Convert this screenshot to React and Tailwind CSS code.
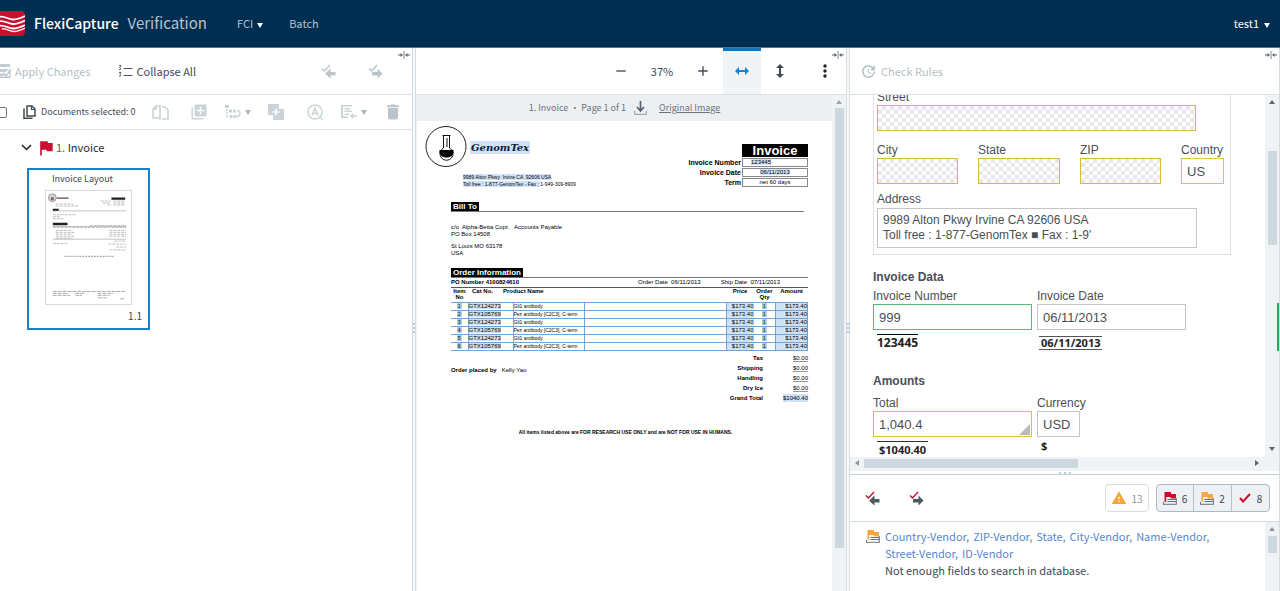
import React from "react";
import { MdAdd, MdDelete, MdFlag, MdLibraryAdd, MdMoreVert, MdRemove, MdUpdate, MdWarning } from "react-icons/md";

const orderLines = [
  { no: 1, cat: "GTX124273", name: "Gli1 antibody" },
  { no: 2, cat: "GTX105769", name: "Pez antibody [C2C3], C-term" },
  { no: 3, cat: "GTX124273", name: "Gli1 antibody" },
  { no: 4, cat: "GTX105769", name: "Pez antibody [C2C3], C-term" },
  { no: 5, cat: "GTX124273", name: "Gli1 antibody" },
  { no: 6, cat: "GTX105769", name: "Pez antibody [C2C3], C-term" },
];

const totals = [
  ["Tax", "$0.00"],
  ["Shipping", "$0.00"],
  ["Handling", "$0.00"],
  ["Dry Ice", "$0.00"],
];

const ruleFields = [
  "Country-Vendor,",
  "ZIP-Vendor,",
  "State,",
  "City-Vendor,",
  "Name-Vendor,",
  "Street-Vendor,",
  "ID-Vendor",
];

/* ---------- icons ---------- */

const Logo = () => (
  <svg viewBox="2 0 25 25" className="h-[25px] w-[25px] shrink-0">
    <rect width="27" height="25" rx="4" fill="#c8102e" />
    <g fill="none" stroke="#fff" strokeWidth="1.8">
      <path d="M0 6c6-2 10 2.500 15 2.500S23 7 27 5" />
      <path d="M0 10.500c6-2 10 2.500 15 2.500s8-1.500 12-3.500" />
      <path d="M0 15c6-2 10 2.500 15 2.500s8-1.500 12-3.500" />
      <path d="M4 18c5-1 7 2.500 12 2.500 4 0 7-1.500 11-3.500" strokeWidth="1.300" />
    </g>
  </svg>
);

const Caret = ({ className = "" }) => (
  <svg viewBox="0 0 6 5" className={`h-[5px] w-1.5 shrink-0 ${className}`}>
    <path d="M0 0h6L3 5z" fill="currentColor" />
  </svg>
);

const CollapseIcon = () => (
  <svg viewBox="0 0 12 8" className="h-2 w-3">
    <path d="M6 0v8" stroke="#7b858d" strokeWidth="1" />
    <path d="M0 4h4M8 4h4" stroke="#5b656e" strokeWidth="1" />
    <path d="M2.500 2L5 4 2.500 6zM9.500 2L7 4l2.500 2z" fill="#5b656e" />
  </svg>
);

const ApplyIcon = () => (
  <svg viewBox="0 0 12 14" className="h-3.5 w-3">
    <path d="M0 0h10v3H0zM0 5h9l-3 3H0zM0 9.500h3l2 2.500H0z" fill="#c3cdd3" />
    <path d="M3.500 9l3 3L10 6v7.300H0" fill="none" stroke="#b4bfc6" strokeWidth="1.200" />
  </svg>
);

const TreeIcon = () => (
  <svg viewBox="0 0 14 12" className="h-3 w-3.5" fill="none" stroke="#4d5760">
    <path d="M4.500 3.500h9M4.500 10.500h9" strokeWidth="1.200" />
    <path d="M0 .5h2L.8 2.500 2 4 0 5M0 7.500h2L.8 9.500 2 10.500 0 11.500" strokeWidth=".9" />
  </svg>
);

const CheckArrow = ({ flip, check, arrow }) => (
  <svg viewBox="0 0 15 15" className="h-[15px] w-[15px]">
    <path d="M1 4.500l2.500 2.500L9 1" fill="none" stroke={check} strokeWidth="1.400" />
    {flip ? (
      <path d="M9.500 4.500L14.500 9.500l-5 5v-3H4V8h5.500z" fill={arrow} />
    ) : (
      <path d="M9.500 4.500V8H14.500v3.500H9.500v3L4 9.700z" fill={arrow} />
    )}
  </svg>
);

const PagesIcon = () => (
  <svg viewBox="0 0 13 14" className="h-3.5 w-[13px]" fill="none" stroke="#3f4a52" strokeWidth="1.500">
    <path d="M4 1h5l3 3v7H4z" />
    <path d="M8.500 1v3.500H12" strokeWidth="1.200" />
    <path d="M1 3.500v9.700h8.500" />
  </svg>
);

const SplitPagesIcon = () => (
  <svg viewBox="0 0 17 17" className="h-[17px] w-[17px]" fill="none" stroke="#cad3d8" strokeWidth="1.600">
    <path d="M8 2H4L1 5v9h7zM8 2v14M10 3h3l3 3v9h-6M4 2v3H1" />
  </svg>
);

const SortIcon = () => (
  <svg viewBox="0 0 16 14" className="h-3.5 w-4">
    <path d="M0 0h4v3H0zM1 4h1.500v2H1zM1 7h1.500v2H1zM1 10.500h2V12H1zM4 4.500h3v3H4zM8 4.500h2.500v3H8zM4.500 10h3v3h-3zM8.500 10h3v3h-3z" fill="#cad3d8" />
    <path d="M12 5.500c4 0 4 6 0 6" fill="none" stroke="#cad3d8" strokeWidth="1.400" />
  </svg>
);

const MergeIcon = () => (
  <svg viewBox="0 0 16 16" className="h-4 w-4">
    <path d="M0 0h11v5h5v11H5v-5H0z" fill="#cad3d8" />
    <path d="M8 4.500v7M4.500 8h7" stroke="#fff" strokeWidth="1.600" />
  </svg>
);

const RecognizeIcon = () => (
  <svg viewBox="0 0 17 17" className="h-[17px] w-[17px]" fill="none" stroke="#cad3d8" strokeWidth="1.500">
    <circle cx="8" cy="8" r="7" />
    <path d="M5 11.500L8 4l3 7.500M6 9.500h4M12.500 13l3.500 3" />
  </svg>
);

const ListArrowIcon = () => (
  <svg viewBox="0 0 16 14" className="h-3.5 w-4">
    <path d="M0 0h11v1.500H2v10h5V13H0zM3.500 3H9v1.500H3.500zM3.500 5.500H11V7H3.500zM3.500 8.500H8V10H3.500zM12 8v2.200h4v1.500h-4V14L9 11z" fill="#cad3d8" />
  </svg>
);

const FlagDocIcon = ({ color }) => (
  <svg viewBox="0 0 14 13" className="h-[13px] w-3.5 shrink-0">
    <path d="M4.500 7.500h9M4.500 9.500h9M0 12.300h13.500M.5 10v2.500M13.300 6v6.500" stroke="#6a747c" strokeWidth="1" fill="none" />
    <path d="M1.500 0H8v2h5v4.500H7.500v-1.500H3.200V10H1.500z" fill={color} />
  </svg>
);

const Flask = () => (
  <svg viewBox="0 0 42 42" className="h-[42px] w-[42px]">
    <circle cx="21" cy="20.500" r="20" fill="#fff" stroke="#222" strokeWidth="1" />
    <path d="M18.500 10v12a6.500 6.500 0 1 0 6 0V10" fill="#fff" stroke="#111" strokeWidth="1" />
    <path d="M14.500 24h14c2 10-16 10-14 0z" fill="#000" />
    <path d="M17.500 9.500h8M22 12v9" stroke="#111" strokeWidth="1" />
  </svg>
);

/* miniature of the scanned page */
const PageThumb = () => (
  <svg viewBox="0 0 87 115" className="h-[115px] w-[87px] border border-[#d5dadd] bg-white">
    <circle cx="6.500" cy="6.500" r="4" fill="#c5dcd5" stroke="#888" strokeWidth=".8" />
    <circle cx="6.500" cy="7.500" r="1.800" fill="#c05060" />
    <path d="M11 7h12" stroke="#666" strokeWidth="1.500" />
    <path d="M67 7.500h14M7 19h6M7 33.500h15" stroke="#222" strokeWidth="2.500" />
    <g stroke="#bbb" strokeWidth="1" strokeDasharray="3 1">
      <path d="M10 13h18M10 15h23M56 10h10M58 12h8M63 14h4M69 10h12M69 12h12M69 14h12M7 24h24M7 26h8M7 28h11M45 35h37M7 53.500h15" />
      <path d="M7 37h75M10 40h17M10 42h20M10 44h17M10 46h20M10 48h17M65 40h17M65 42h17M65 44h17M65 46h17M70 51h12M64 54h18M72 57h10M65 60h17" />
    </g>
    <path d="M7 20h75M7 36h75M7 49h75" stroke="#999" strokeWidth=".6" />
    <path d="M19 66.500h50" stroke="#aaa" strokeWidth="1.300" strokeDasharray="2 1" />
    <g stroke="#aaa" strokeWidth="1" strokeDasharray="4 1">
      <path d="M7 102.500h75M7 104.500h16M7 106.500h18M30 104.500h9M30 106.500h7M53 104.500h16M53 106.500h12M53 109h10M76 110h5" />
    </g>
  </svg>
);

/* ---------- shared bits ---------- */

const Splitter = () => (
  <div className="flex flex-col items-center justify-center gap-0.5 border-x border-[#d3dce2] bg-[#f7f9fa] pt-4">
    <i className="size-0.5 bg-[#c0ccd3]" />
    <i className="size-0.5 bg-[#c0ccd3]" />
    <i className="size-0.5 bg-[#c0ccd3]" />
  </div>
);

const Field = ({ id, label, value, className, tone = "border-[#c4c7ca]", empty }) => (
  <div className={`flex flex-col ${className}`}>
    <label htmlFor={id} className="text-xs leading-4 whitespace-nowrap">{label}</label>
    <input
      id={id}
      defaultValue={value}
      className={`h-[26px] w-full border px-[5px] text-[13px] ${tone} ${
        empty ? "bg-[repeating-conic-gradient(#e8e8e8_0_25%,#fff_0_50%)] bg-[length:8px_8px]" : "bg-white"
      }`}
    />
  </div>
);

const Header = () => (
  <header className="flex h-12 shrink-0 items-center border-b border-[#5c7288] bg-[#002e50] pr-2.5 text-[11px] text-[#b6c4d0]">
    <Logo />
    <h1 className="ml-[9px] flex items-baseline gap-[9px]">
      <span className="text-sm font-medium text-white">FlexiCapture</span>
      <span className="text-[15px]">Verification</span>
    </h1>
    <nav className="ml-[30px] flex gap-[26px]">
      <button className="flex items-center gap-1">
        FCI <Caret className="mt-1 text-white" />
      </button>
      <a href="#batch">Batch</a>
    </nav>
    <button className="ml-auto flex items-center gap-[5px] text-white">
      test1 <Caret className="mt-1" />
    </button>
  </header>
);

const DocumentsPanel = () => (
  <section className="flex min-w-0 flex-col">
    <div className="relative flex h-[47px] shrink-0 items-center border-b border-[#d9e1e6] text-[11px]">
      <button className="flex items-center gap-[3px] text-[#b4bfc6]">
        <ApplyIcon /> Apply Changes
      </button>
      <button className="ml-7 flex items-center gap-1 text-[#414b54]">
        <TreeIcon /> Collapse All
      </button>
      <div className="mr-[29px] ml-auto flex gap-8">
        <button aria-label="Previous error"><CheckArrow check="#b9c4cb" arrow="#b9c4cb" /></button>
        <button aria-label="Next error"><CheckArrow flip check="#b9c4cb" arrow="#b9c4cb" /></button>
      </div>
      <button aria-label="Collapse panel" className="absolute top-[3px] right-0.5"><CollapseIcon /></button>
    </div>

    <div className="flex h-[35px] shrink-0 items-center border-b border-[#d9e1e6]">
      <input
        type="checkbox"
        aria-label="Select all documents"
        className="-ml-1 size-[11px] shrink-0 appearance-none rounded-[2px] border border-[#6d757c] bg-white"
      />
      <div className="ml-4 flex w-[118px] items-center gap-[5px] text-[9px] whitespace-nowrap text-[#414b54]">
        <PagesIcon /> Documents selected: 0
      </div>
      <div className="grid flex-1 grid-cols-7 items-center justify-items-center">
        <button aria-label="Split document"><SplitPagesIcon /></button>
        <button aria-label="Add page"><MdLibraryAdd className="size-[18px] text-[#cad3d8]" /></button>
        <button aria-label="Document type" className="flex items-center gap-1 text-[#cad3d8]"><SortIcon /><Caret className="text-[#a9b5bd]" /></button>
        <button aria-label="Merge"><MergeIcon /></button>
        <button aria-label="Recognize"><RecognizeIcon /></button>
        <button aria-label="Move to" className="flex items-center gap-1"><ListArrowIcon /><Caret className="text-[#a9b5bd]" /></button>
        <button aria-label="Delete"><MdDelete className="size-5 text-[#b9c4cb]" /></button>
      </div>
    </div>

    <div className="flex h-[35px] items-center pl-[21px] text-[11px] text-[#222a30]">
      <button aria-label="Toggle document" className="mr-2">
        <svg viewBox="0 0 11 7" className="h-[7px] w-[11px]">
          <path d="M1 1l4.500 4.500L10 1" fill="none" stroke="#222" strokeWidth="1.500" />
        </svg>
      </button>
      <MdFlag className="-ml-1 size-5 text-[#c8102e]" />
      <span><span className="text-[#5b656e]">1.</span> Invoice</span>
    </div>

    <button className="mt-[3px] ml-[27px] flex h-[162px] w-[123px] flex-col items-center border-2 border-[#1b80c4] bg-white text-[#414b54]">
      <span className="mb-0.5 pr-3 text-[9px] leading-[18px]">Invoice Layout</span>
      <PageThumb />
      <span className="mt-0.5 mr-1.5 self-end text-[10px] leading-[18px]">1.1</span>
    </button>
  </section>
);

const hl = "bg-[#cfe2f8]";

const InvoicePage = () => (
  <article className="min-w-0 flex-1 bg-white pt-[5px] pr-6 pl-2 font-['Liberation_Sans',sans-serif] text-[6px] leading-[7px] text-black">
    <div className="flex">
      <Flask />
      <div className="ml-[3px] flex flex-col items-start pt-[15px]">
        <h2 className={`px-px font-['DejaVu_Serif',serif] text-[10px] leading-[13px] font-bold text-[#0b1c38] italic ${hl}`}>GenomTex</h2>
        <p className="mt-5 -ml-[7px] text-[5px] whitespace-pre">
          <span className={hl}>9989 Alton Pkwy  Irvine CA  92606 USA</span>
          <br />
          <span className={hl}>Toll free : 1-877-GenomTex - Fax : </span>1-949-309-8909
        </p>
      </div>
      <table className="mt-[17px] ml-auto h-[42px] border-separate border-spacing-y-px text-right text-[7px] leading-[7px]">
        <tbody>
          <tr>
            <td />
            <th className="w-[66px] bg-black text-center text-[13px] leading-[13px] font-bold text-white">Invoice</th>
          </tr>
          <tr>
            <th className="pr-px">Invoice Number</th>
            <td className="border border-[#888] pl-2 text-left text-[6px]"><span className={hl}>123445</span></td>
          </tr>
          <tr>
            <th className="pr-px">Invoice Date</th>
            <td className="border border-[#888] text-center text-[6px]"><span className={hl}>06/11/2013</span></td>
          </tr>
          <tr>
            <th className="pr-px">Term</th>
            <td className="border border-[#888] text-center text-[6px]">net 60 days</td>
          </tr>
        </tbody>
      </table>
    </div>

    <div className="ml-[26px]">
      <h3 className="mt-3.5 mr-1 flex border-b border-[#777] text-[8px] leading-[9px] font-bold">
        <span className="bg-black px-0.5 text-white">Bill To</span>
      </h3>
      <p className="mt-3 whitespace-pre">c/o  Alpha-Betta Copr,   Accounts Payable</p>
      <p>PO Box 14508</p>
      <p className="mt-[5px]">St Louis MO  63178</p>
      <p>USA</p>

      <h3 className="mt-[11px] flex border-b border-[#777] text-[8px] leading-[9px] font-bold">
        <span className="bg-black px-0.5 text-white">Order Information</span>
      </h3>
      <div className="flex leading-[9px] whitespace-pre">
        <b className="flex-1">PO Number 4100824610</b>
        <span className="mr-5">Order Date  06/11/2013</span>
        <span className="mr-7">Ship Date  07/11/2013</span>
      </div>

      <table className="w-full table-fixed border-collapse border-y border-[#555]">
        <colgroup>
          <col className="w-[17px]" />
          <col className="w-[45px]" />
          <col className="w-[71px]" />
          <col />
          <col className="w-[27px]" />
          <col className="w-[22px]" />
          <col className="w-[32px]" />
        </colgroup>
        <thead>
          <tr className="h-[15px] text-center align-top text-[6px] leading-[6px]">
            <th>Item<br />No</th>
            <th className="pl-1 text-left">Cat No.</th>
            <th className="text-left whitespace-nowrap" colSpan={2}><span className="-ml-2.5">Product Name</span></th>
            <th>Price</th>
            <th>Order<br />Qty</th>
            <th>Amount</th>
          </tr>
        </thead>
        <tbody className="text-[5px] leading-[7px] whitespace-nowrap">
          {orderLines.map((line) => (
            <tr key={line.no} className="h-2 border-y border-[#6aa7dd]">
              <td className="text-center"><span className="bg-[#a9cdf0] px-px">{line.no}</span></td>
              <td className="border-x border-[#6aa7dd] text-[6px]"><span className={hl}>{line.cat}</span></td>
              <td className="overflow-hidden">{line.name}</td>
              <td className="border-x border-[#6aa7dd]" />
              <td className={`text-right text-[6px] ${hl}`}>$173.40</td>
              <td className="text-center"><span className="bg-[#a9cdf0] px-px">1</span></td>
              <td className={`border-x border-[#6aa7dd] text-right text-[6px] ${hl}`}>$173.40</td>
            </tr>
          ))}
        </tbody>
      </table>

      <div className="mt-0.5 flex justify-between leading-[10px]">
        <p className="mt-3"><b>Order placed by</b> &nbsp; Kelly Yao</p>
        <dl className="grid grid-cols-[45px_45px] text-right">
          {totals.map(([name, sum]) => (
            <React.Fragment key={name}>
              <dt className="font-bold">{name}</dt>
              <dd><span className="border-b border-[#999]">{sum}</span></dd>
            </React.Fragment>
          ))}
          <dt className="font-bold">Grand Total</dt>
          <dd><span className={`py-px ${hl}`}>$1040.40</span></dd>
        </dl>
      </div>
      <p className="mt-[26px] pr-2 text-center text-[5px] font-bold whitespace-nowrap">
        All items listed above are FOR RESEARCH USE ONLY and are NOT FOR USE IN HUMANS.
      </p>
    </div>
  </article>
);

const ImagePanel = () => (
  <section className="flex min-w-0 flex-col">
    <div className="relative flex h-[47px] shrink-0 items-stretch justify-end border-b border-[#d9e1e6] pr-[11px] text-[11px] text-[#414b54]">
      <button aria-label="Zoom out" className="px-3"><MdRemove className="size-4" /></button>
      <span className="flex w-[42px] items-center justify-center">37%</span>
      <button aria-label="Zoom in" className="px-3"><MdAdd className="size-4" /></button>
      <button aria-label="Fit width" className="flex w-[38px] items-center justify-center border-t-[3px] border-[#0f76c6] bg-[#f0f4f7] pb-[3px]">
        <svg viewBox="0 0 14 8" className="h-2 w-3.5" fill="#0f86dc">
          <path d="M4 0v3h6V0l4 4-4 4V5H4v3L0 4z" />
        </svg>
      </button>
      <button aria-label="Fit height" className="flex w-[38px] items-center justify-center">
        <svg viewBox="0 0 8 14" className="h-3.5 w-2" fill="#414b54">
          <path d="M0 4h3v6H0l4 4 4-4H5V4h3L4 0z" />
        </svg>
      </button>
      <button aria-label="More" className="ml-4"><MdMoreVert className="size-5 text-[#222]" /></button>
      <button aria-label="Collapse panel" className="absolute top-[3px] right-0.5"><CollapseIcon /></button>
    </div>

    <div className="flex min-h-0 flex-1">
      <div className="flex min-w-0 flex-1 flex-col overflow-hidden bg-[#edf0f3] pl-px">
        <div className="flex h-[26px] shrink-0 items-center justify-center text-[9px] text-[#6a757e]">
          <span>1. Invoice • Page 1 of 1</span>
          <button aria-label="Download" className="mx-2">
            <svg viewBox="0 0 13 14" className="h-3.5 w-[13px]" fill="none" stroke="#56616a">
              <path d="M6.500 0v9M3 6l3.500 4L10 6" strokeWidth="1.700" />
              <path d="M.7 10v3.300h11.600V10" stroke="#8b969e" />
            </svg>
          </button>
          <a href="#original" className="ml-1 underline">Original Image</a>
        </div>
        <InvoicePage />
      </div>
      <div className="flex w-3.5 flex-col items-center bg-[#eff3f5] pt-[5px]">
        <svg viewBox="0 0 6 4" className="h-1 w-1.5"><path d="M0 4h6L3 0z" fill="#9ba6ad" /></svg>
        <div className="mt-1 mb-[43px] w-[9px] flex-1 bg-[#ccd8dd]" />
      </div>
    </div>
  </section>
);

const InvoiceForm = () => (
  <form className="-mt-1.5 min-w-0 flex-1 pl-[23px] font-['Liberation_Sans',sans-serif] text-[#4a4f55]">
    <div className="w-[358px] border border-t-0 border-[#dfe2e4] px-[3px] pb-1.5">
      <Field id="street" label="Street" className="w-[319px]" tone="border-[#d9b93b]" empty />
      <div className="mt-[11px] flex gap-5">
        <Field id="city" label="City" className="w-[81px]" tone="border-[#d9b93b]" empty />
        <Field id="state" label="State" className="w-[82px]" tone="border-[#d9b93b]" empty />
        <Field id="zip" label="ZIP" className="w-[81px]" tone="border-[#d9b93b]" empty />
        <Field id="country" label="Country" value="US" className="w-[43px]" tone="border-[#e6bf45]" />
      </div>
      <div className="mt-1.5 flex flex-col">
        <label htmlFor="address" className="text-xs leading-[18px]">Address</label>
        <textarea
          id="address"
          rows={2}
          defaultValue={"9989 Alton Pkwy Irvine CA 92606 USA\nToll free : 1-877-GenomTex ■ Fax : 1-9'"}
          className="h-10 w-80 resize-none overflow-hidden border border-[#c4c7ca] px-[5px] py-1 text-xs leading-[15px]"
        />
      </div>
    </div>

    <h3 className="mt-3.5 text-xs leading-4 font-bold">Invoice Data</h3>
    <div className="mt-[3px] flex gap-[5px]">
      <div>
        <Field id="number" label="Invoice Number" value="999" className="w-[159px]" tone="border-[#58b97c]" />
        <span className="mt-[3px] ml-1 inline-block border-t border-black font-['Noto_Sans',sans-serif] text-xs leading-4 font-bold text-[#222]">123445</span>
      </div>
      <div>
        <Field id="date" label="Invoice Date" value="06/11/2013" className="w-[149px]" />
        <span className="mt-[3px] ml-0.5 inline-block border-y border-[#555] px-0.5 font-['Noto_Sans',sans-serif] text-[11px] leading-3 font-bold text-[#222]">06/11/2013</span>
      </div>
    </div>

    <h3 className="mt-[19px] text-xs leading-4 font-bold">Amounts</h3>
    <div className="mt-1.5 flex gap-[5px]">
      <div>
        <div className="relative">
          <Field id="total" label="Total" value="1,040.4" className="w-[159px]" tone="border-[#e0bd3c]" />
          <svg viewBox="0 0 11 11" className="absolute right-0.5 bottom-0.5 size-[11px]"><path d="M11 0v11H0z" fill="#b9b9bd" /></svg>
        </div>
        <span className="mt-[3px] ml-1 inline-block border-t border-[#333] px-0.5 font-['Noto_Sans',sans-serif] text-[11px] leading-4 font-bold text-[#222]">$1040.40</span>
      </div>
      <div>
        <Field id="currency" label="Currency" value="USD" className="w-[43px]" />
        <span className="mt-[3px] ml-1 block font-['Noto_Sans',sans-serif] text-[11px] leading-3 font-bold text-[#222]">$</span>
      </div>
    </div>
  </form>
);

const FormPanel = () => (
  <section className="flex min-w-0 flex-col border-r border-[#d3dce2]">
    <div className="relative flex h-[47px] shrink-0 items-center border-b border-[#d9e1e6] pl-2.5 text-[11px] text-[#b4bfc6]">
      <button className="flex items-center gap-1">
        <MdUpdate className="size-[17px]" /> Check Rules
      </button>
      <button aria-label="Collapse panel" className="absolute top-[3px] right-0.5"><CollapseIcon /></button>
    </div>

    <div className="relative flex min-h-0 flex-1 overflow-hidden">
      <InvoiceForm />
      <div className="flex w-3.5 shrink-0 flex-col items-center bg-[#f0f3f5] pt-[5px] pb-1.5">
        <svg viewBox="0 0 6 4" className="h-1 w-1.5"><path d="M0 4h6L3 0z" fill="#5b656e" /></svg>
        <div className="mt-[47px] h-[94px] w-[9px] bg-[#ccd8dd]" />
        <svg viewBox="0 0 6 4" className="mt-auto h-1 w-1.5"><path d="M0 0h6L3 4z" fill="#5b656e" /></svg>
      </div>
      <i className="absolute top-[208px] right-0 h-12 w-0.5 bg-[#2da55d]" />
    </div>
    <div className="flex h-3.5 shrink-0 items-center bg-[#f0f3f5] px-[5px] pb-0.5">
      <svg viewBox="0 0 4 6" className="h-1.5 w-1"><path d="M4 0v6L0 3z" fill="#8b969e" /></svg>
      <div className="ml-[5px] h-[9px] w-[51%] bg-[#ccd8dd]" />
      <svg viewBox="0 0 4 6" className="mr-[15px] ml-auto h-1.5 w-1"><path d="M0 0v6l4-3z" fill="#5b656e" /></svg>
    </div>
    <div className="flex h-1 shrink-0 items-center justify-center gap-[3px] border-b border-[#c3d0d7]">
      <i className="size-0.5 bg-[#c0ccd3]" />
      <i className="size-0.5 bg-[#c0ccd3]" />
      <i className="size-0.5 bg-[#c0ccd3]" />
    </div>

    <div className="flex h-[47px] shrink-0 items-center border-b border-[#d3dce2] pr-[9px] pl-[15px] text-[10px] text-[#414b54]">
      <button aria-label="Previous error" className="mr-[29px]"><CheckArrow check="#c8102e" arrow="#4c5a60" /></button>
      <button aria-label="Next error"><CheckArrow flip check="#c8102e" arrow="#4c5a60" /></button>
      <button className="ml-auto flex h-7 w-11 items-center justify-center gap-1 rounded border border-[#d5dde2] text-[#8b969e]">
        <MdWarning className="size-4 text-[#fba63c]" /> 13
      </button>
      <div className="ml-[7px] flex h-7 divide-x divide-[#b3c2cc] overflow-hidden rounded border border-[#a9bac5] bg-[#edf1f4]">
        <button className="flex w-[37px] items-center justify-center gap-[5px]"><FlagDocIcon color="#c8102e" /> 6</button>
        <button className="flex w-[38px] items-center justify-center gap-[5px]"><FlagDocIcon color="#fba63c" /> 2</button>
        <button className="flex w-[37px] items-center justify-center gap-1.5">
          <svg viewBox="0 0 12 10" className="h-2.5 w-3"><path d="M1 5l3 3.500L11 1" fill="none" stroke="#c8102e" strokeWidth="2" /></svg> 8
        </button>
      </div>
    </div>

    <div className="flex h-[69px] shrink-0">
      <div className="flex flex-1 gap-[5px] pt-1.5 pl-4 text-[11px] leading-[17px] text-[#414b54]">
        <div className="pt-0.5"><FlagDocIcon color="#fba63c" /></div>
        <div>
          <p className="flex max-w-[340px] flex-wrap gap-x-1">
            {ruleFields.map((field) => (
              <a key={field} href="#fields" className="whitespace-nowrap text-[#5587d0]">{field}</a>
            ))}
          </p>
          <p>Not enough fields to search in database.</p>
        </div>
      </div>
      <div className="flex w-3.5 flex-col items-center bg-[#f0f3f5] pt-[5px]">
        <svg viewBox="0 0 6 4" className="h-1 w-1.5"><path d="M0 4h6L3 0z" fill="#8b969e" /></svg>
        <div className="mt-[5px] h-[17px] w-[9px] bg-[#ccd8dd]" />
      </div>
    </div>
  </section>
);

export default function App() {
  return (
    <div className="flex h-screen flex-col overflow-hidden bg-white font-['Noto_Sans_CJK_SC',sans-serif]">
      <Header />
      <main className="grid min-h-0 flex-1 grid-cols-[412fr_4px_430fr_4px_430fr] grid-rows-1">
        <DocumentsPanel />
        <Splitter />
        <ImagePanel />
        <Splitter />
        <FormPanel />
      </main>
    </div>
  );
}
